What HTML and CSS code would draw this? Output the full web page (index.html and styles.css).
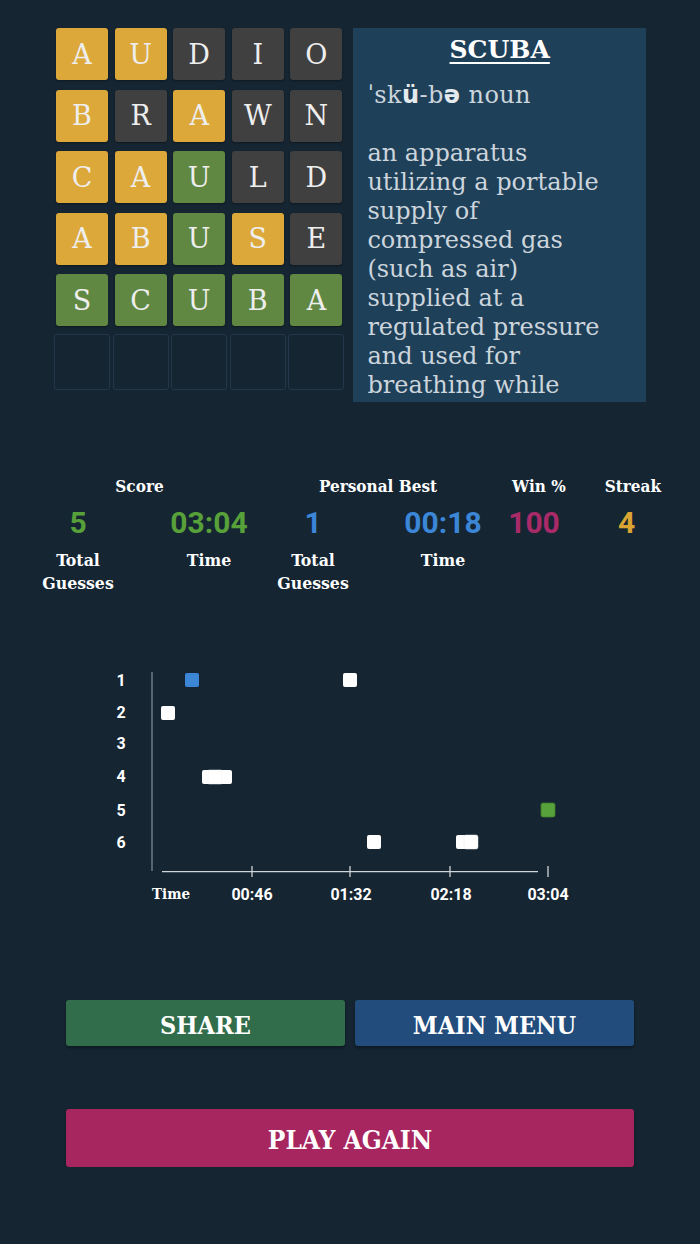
FILE: index.html
```html
<!DOCTYPE html>
<html lang="en">
<head>
<meta charset="utf-8">
<title>Result</title>
<link rel="stylesheet" href="styles.css">
</head>
<body>
<main class="page">
  <section class="top">
    <div class="board">
      <div class="tile present">A</div><div class="tile present">U</div><div class="tile absent">D</div><div class="tile absent">I</div><div class="tile absent">O</div>
      <div class="tile present">B</div><div class="tile absent">R</div><div class="tile present">A</div><div class="tile absent">W</div><div class="tile absent">N</div>
      <div class="tile present">C</div><div class="tile present">A</div><div class="tile correct">U</div><div class="tile absent">L</div><div class="tile absent">D</div>
      <div class="tile present">A</div><div class="tile present">B</div><div class="tile correct">U</div><div class="tile present">S</div><div class="tile absent">E</div>
      <div class="tile correct">S</div><div class="tile correct">C</div><div class="tile correct">U</div><div class="tile correct">B</div><div class="tile correct">A</div>
      <div class="tile empty"></div><div class="tile empty"></div><div class="tile empty"></div><div class="tile empty"></div><div class="tile empty"></div>
    </div>
    <article class="definition">
      <h2 class="word">SCUBA</h2>
      <p class="pron">ˈsk<b class="ph">ü</b>-b<b class="ph">ə</b> noun</p>
      <p class="meaning">an apparatus<br>utilizing a portable<br>supply of<br>compressed gas<br>(such as air)<br>supplied at a<br>regulated pressure<br>and used for<br>breathing while</p>
    </article>
  </section>

  <section class="stats">
    <div class="group score">
      <div class="ghead">Score</div>
      <div class="gcols">
        <div class="col w76"><div class="val green">5</div><div class="lbl">Total<br>Guesses</div></div>
        <div class="col w80 gap53"><div class="val green">03:04</div><div class="lbl">Time</div></div>
      </div>
    </div>
    <div class="group best">
      <div class="ghead">Personal Best</div>
      <div class="gcols">
        <div class="col w76"><div class="val blue">1</div><div class="lbl">Total<br>Guesses</div></div>
        <div class="col w80 gap52"><div class="val blue">00:18</div><div class="lbl">Time</div></div>
      </div>
    </div>
    <div class="group win">
      <div class="ghead">Win %</div>
      <div class="gcols">
        <div class="col w60"><div class="val pink">100</div></div>
      </div>
    </div>
    <div class="group streak">
      <div class="ghead">Streak</div>
      <div class="gcols">
        <div class="col w60"><div class="val gold">4</div></div>
      </div>
    </div>
  </section>

  <svg class="chart" width="700" height="250" viewBox="0 0 700 250" xmlns="http://www.w3.org/2000/svg">
    <g class="ylabels">
      <text x="121" y="27">1</text>
      <text x="121" y="59">2</text>
      <text x="121" y="90">3</text>
      <text x="121" y="123">4</text>
      <text x="121" y="157">5</text>
      <text x="121" y="189">6</text>
    </g>
    <line x1="152" y1="13" x2="152" y2="212" stroke="#6d7a85" stroke-width="1.5"/>
    <line x1="162" y1="212.7" x2="538" y2="212.7" stroke="#cfd4d8" stroke-width="1.3"/>
    <g stroke="#cfd4d8" stroke-width="1.3">
      <line x1="252" y1="207" x2="252" y2="218"/>
      <line x1="350" y1="207" x2="350" y2="218"/>
      <line x1="450" y1="207" x2="450" y2="218"/>
      <line x1="548" y1="207" x2="548" y2="218"/>
    </g>
    <text class="tlabel-time" x="171" y="240">Time</text>
    <g class="tlabels">
      <text x="252" y="241">00:46</text>
      <text x="351" y="241">01:32</text>
      <text x="451" y="241">02:18</text>
      <text x="548" y="241">03:04</text>
    </g>
    <g class="marks">
      <rect x="185" y="14" width="14" height="14" rx="2" fill="#3b86d6"/>
      <rect x="343" y="14" width="14" height="14" rx="2" fill="#ffffff"/>
      <rect x="161" y="47" width="14" height="14" rx="2" fill="#ffffff"/>
      <rect x="202" y="111" width="14" height="14" rx="2" fill="#ffffff"/>
      <rect x="218" y="111" width="14" height="14" rx="2" fill="#ffffff"/>
      <rect x="208" y="111" width="14" height="14" rx="1" fill="#ffffff" stroke="#ececec" stroke-width="0.5"/>
      <rect x="541" y="144" width="14" height="14" rx="2" fill="#57a23b" stroke="#3f7f2b" stroke-width="0.8"/>
      <rect x="367" y="176" width="14" height="14" rx="2" fill="#ffffff"/>
      <rect x="456" y="176" width="14" height="14" rx="2" fill="#ffffff"/>
      <rect x="464" y="176" width="14" height="14" rx="2" fill="#ffffff" stroke="#e6e6e6" stroke-width="0.5"/>
    </g>
  </svg>

  <section class="actions">
    <button class="btn share">SHARE</button>
    <button class="btn menu">MAIN MENU</button>
  </section>
  <section class="again">
    <button class="btn play">PLAY AGAIN</button>
  </section>
</main>
</body>
</html>
```

FILE: styles.css
```css
html, body {
  margin: 0;
  padding: 0;
}
body {
  background: #152532;
  color: #ffffff;
  font-family: "DejaVu Serif", "Liberation Serif", serif;
}
.page {
  width: 700px;
}

/* top: board + definition */
.top {
  display: flex;
  align-items: flex-start;
  gap: 9px;
  padding: 26px 54px 0;
}
.board {
  display: grid;
  grid-template-columns: repeat(5, 56px);
  column-gap: 2.6px;
  row-gap: 5.6px;
}
.tile {
  width: 52px;
  height: 52px;
  margin: 2px;
  border-radius: 3px;
  display: flex;
  align-items: center;
  justify-content: center;
  font-size: 27px;
  color: #eeeeee;
  box-shadow: 0 1px 2px rgba(0, 0, 0, 0.35);
}
.present { background: #dca83a; }
.absent { background: #404040; }
.correct { background: #608842; }
.tile.empty {
  width: 56px;
  height: 56px;
  margin: 0;
  box-sizing: border-box;
  border: 1px solid #24364a;
  background: transparent;
  box-shadow: none;
}

.definition {
  margin-top: 2px;
  width: 293px;
  height: 374px;
  box-sizing: border-box;
  padding: 7px 14px 0;
  background: #1f4059;
  overflow: hidden;
  color: #ccd5dc;
}
.word {
  margin: 0;
  font-size: 25px;
  line-height: 30px;
  font-weight: bold;
  text-align: center;
  color: #ffffff;
  text-decoration: underline;
  text-decoration-thickness: 2px;
  text-underline-offset: 4px;
}
.pron {
  margin: 15.5px 0 0;
  font-size: 24px;
  line-height: 29px;
  letter-spacing: 0.4px;
  white-space: nowrap;
}
.ph {
  font-family: "DejaVu Sans", "Noto Sans", sans-serif;
  font-weight: bold;
  color: #e4eaee;
}
.meaning {
  margin: 29px 0 0;
  font-size: 24px;
  line-height: 29px;
  white-space: nowrap;
}

/* stats */
.stats {
  display: flex;
  align-items: flex-start;
  padding-left: 38px;
  margin-top: 72px;
}
.group {
  display: flex;
  flex-direction: column;
}
.best { margin-left: 24px; }
.win { margin-left: 21px; }
.streak { margin-left: 31px; }
.ghead {
  font-family: "DejaVu Serif", serif;
  font-stretch: condensed;
  font-weight: bold;
  font-size: 17px;
  line-height: 24px;
  text-align: center;
  white-space: nowrap;
}
.score .ghead { padding-right: 8px; }
.win .ghead,
.streak .ghead { padding-left: 8px; }
.gcols {
  display: flex;
  margin-top: 7px;
}
.col {
  display: flex;
  flex-direction: column;
  align-items: center;
}
.w76 { width: 80px; }
.w80 { width: 80px; }
.w60 { width: 60px; }
.gap53 { margin-left: 51px; }
.gap52 { margin-left: 50px; }
.val {
  font-family: Roboto, "Noto Sans", sans-serif;
  font-weight: bold;
  font-size: 30px;
  line-height: 36px;
  white-space: nowrap;
}
.green { color: #57a03a; }
.blue { color: #3b86d6; }
.pink { color: #a92a68; }
.gold { color: #d9a431; }
.lbl {
  margin-top: 8px;
  font-family: "DejaVu Serif", serif;
  font-stretch: condensed;
  font-weight: bold;
  font-size: 17.5px;
  line-height: 23px;
  text-align: center;
  white-space: nowrap;
}

/* chart */
.chart {
  display: block;
  margin-top: 64px;
}
.ylabels text,
.tlabels text {
  font-family: Roboto, "Noto Sans", sans-serif;
  font-weight: bold;
  font-size: 16px;
  fill: #ffffff;
  text-anchor: middle;
}
.tlabel-time {
  font-family: "DejaVu Serif", serif;
  font-stretch: condensed;
  font-weight: bold;
  font-size: 15px;
  fill: #ffffff;
  text-anchor: middle;
}

/* buttons */
.actions {
  display: flex;
  gap: 10px;
  padding: 0 66px;
  margin-top: 91px;
}
.again {
  display: flex;
  padding: 0 66px;
  margin-top: 63px;
}
.btn {
  border: none;
  border-radius: 3px;
  color: #ffffff;
  font-family: "DejaVu Serif", serif;
  font-stretch: condensed;
  font-weight: bold;
  font-size: 25px;
  box-shadow: 0 2px 3px rgba(0, 0, 0, 0.35);
  padding: 4px 0 0;
  cursor: pointer;
}
.share {
  flex: 1;
  height: 46px;
  background: #326d4b;
}
.menu {
  flex: 1;
  height: 46px;
  background: #214c7b;
}
.play {
  flex: 1;
  height: 58px;
  padding-top: 4px;
  background: #a7265f;
  font-size: 26px;
}
```
